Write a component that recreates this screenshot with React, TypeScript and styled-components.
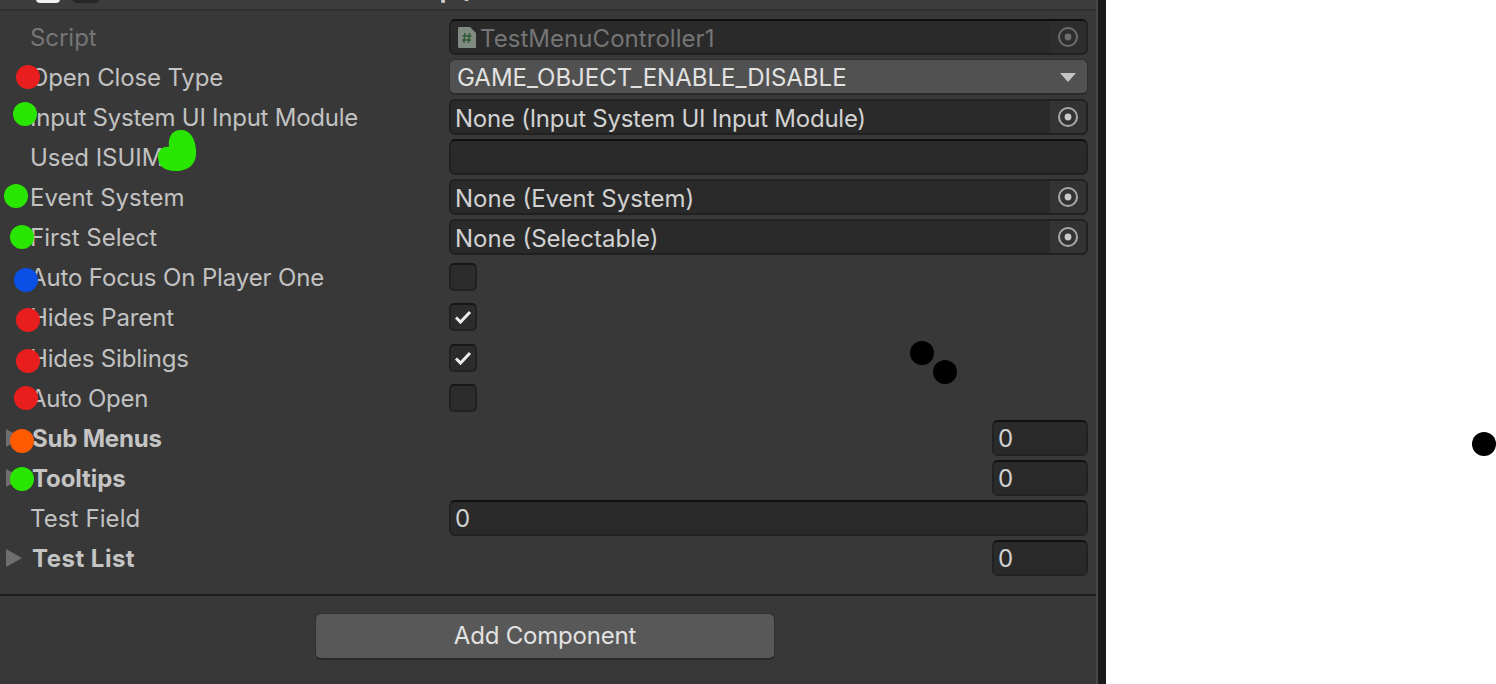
import React from "react";
import styled, { createGlobalStyle } from "styled-components";

const GlobalStyle = createGlobalStyle`
  html, body { margin: 0; padding: 0; background: #fff; }
  body { font-family: "Inter", "Liberation Sans", sans-serif; overflow: hidden; }
`;

const Page = styled.div`
  position: relative;
  display: flex;
  width: 1496px;
  height: 684px;
  overflow: hidden;
  background: #fff;
`;

const Inspector = styled.div`
  display: flex;
  flex-direction: column;
  width: 1096px;
  background: #383838;
`;

const Divider = styled.div`
  width: 8px;
  border-left: 2px solid #484848;
  background: #1a1a1a;
`;

const Header = styled.div`
  display: flex;
  align-items: flex-end;
  flex: none;
  height: 9px;
  padding-left: 36px;
  overflow: hidden;
  background: #3c3c3c;
  border-bottom: 2px solid #2f2f2f;
`;

const HeaderCheck = styled.div`
  flex: none;
  width: 24px;
  height: 24px;
  margin-bottom: 6px;
  border-radius: 4px;
  background: #f0f0f0;
`;

const HeaderIcon = styled.div`
  flex: none;
  width: 28px;
  height: 28px;
  margin: 0 0 6px 12px;
  border-radius: 5px;
  background: #262626;
`;

const HeaderTitle = styled.div`
  flex: none;
  margin: 0 0 0 34px;
  position: relative;
  top: -5px;
  font-size: 24px;
  line-height: 29px;
  font-weight: 700;
  color: #d0d0d0;
  white-space: nowrap;
`;

const Rows = styled.div`
  display: flex;
  flex-direction: column;
  flex: none;
  gap: 4.065px;
  padding: 8px 8px 0 0;
`;

const Row = styled.div`
  display: grid;
  grid-template-columns: 449px 1fr;
  align-items: center;
  height: 36px;
`;

const Label = styled.div<{ $dim?: boolean; $track?: number }>`
  padding: 2px 0 0 30px;
  font-size: 24px;
  line-height: 34px;
  letter-spacing: ${({ $track }) => $track ?? -0.05}px;
  color: ${({ $dim }) => ($dim ? "#767676" : "#c2c2c2")};
  white-space: nowrap;
`;

const FoldLabel = styled.div<{ $track?: number }>`
  display: flex;
  align-items: center;
  gap: 10px;
  padding: 2px 0 0 6px;
  font-size: 24px;
  line-height: 34px;
  font-weight: 700;
  letter-spacing: ${({ $track }) => $track ?? 0}px;
  color: #c4c4c4;
`;

const Arrow = styled.div`
  flex: none;
  width: 0;
  height: 0;
  margin-top: -2px;
  border-style: solid;
  border-width: 9px 0 9px 16px;
  border-color: transparent transparent transparent #6e6e6e;
`;

const Field = styled.div<{ $small?: boolean }>`
  display: flex;
  align-items: center;
  justify-self: ${({ $small }) => ($small ? "end" : "stretch")};
  box-sizing: border-box;
  width: ${({ $small }) => ($small ? "96px" : "auto")};
  height: 36px;
  overflow: hidden;
  border: 2px solid #212121;
  border-top-color: #0f0f0f;
  border-radius: 6px;
  background: #2a2a2a;
`;

const ObjectField = styled(Field)`
  border-color: #212121;
`;

const FieldText = styled.div<{ $dim?: boolean; $track?: number }>`
  flex: 1;
  padding: 2px 0 0 4px;
  font-size: 24px;
  line-height: 30px;
  letter-spacing: ${({ $track }) => $track ?? -0.05}px;
  color: ${({ $dim }) => ($dim ? "#757575" : "#d2d2d2")};
  white-space: nowrap;
`;

const ObjectText = styled(FieldText)`
  padding-top: 4px;
  line-height: 28px;
`;

const Picker = styled.div`
  display: flex;
  align-items: center;
  justify-content: center;
  flex: none;
  width: 36px;
  height: 100%;
  background: #333333;
`;

const ScriptPicker = styled(Picker)`
  background: #2d2d2d;
`;

const ScriptIcon = styled.svg`
  flex: none;
  margin-left: 7px;
`;

const Dropdown = styled.div`
  display: flex;
  align-items: center;
  justify-content: space-between;
  box-sizing: border-box;
  height: 36px;
  padding: 2px 11px 0 7px;
  border: 1px solid #2f2f2f;
  border-bottom: 2px solid #2a2a2a;
  border-radius: 6px;
  background: #515151;
  font-size: 24px;
  line-height: 30px;
  color: #e2e2e2;
  white-space: nowrap;
`;

const DropArrow = styled.div`
  width: 0;
  height: 0;
  border-style: solid;
  border-width: 9px 8px 0 8px;
  border-color: #c4c4c4 transparent transparent transparent;
`;

const CheckBox = styled.div`
  display: flex;
  align-items: center;
  justify-content: center;
  box-sizing: border-box;
  width: 28px;
  height: 28px;
  border: 2px solid #212121;
  border-top-color: #171717;
  border-radius: 5px;
  background: #2c2c2c;
`;

const Footer = styled.div`
  display: flex;
  justify-content: center;
  flex: 1;
  margin-top: 18px;
  padding: 17px 6px 0 0;
  border-top: 2px solid #1f1f1f;
`;

const AddButton = styled.div`
  display: flex;
  align-items: center;
  justify-content: center;
  box-sizing: border-box;
  width: 460px;
  height: 47px;
  border: 1px solid #303030;
  border-bottom: 2px solid #282828;
  border-radius: 6px;
  background: #585858;
  font-size: 24px;
  letter-spacing: -0.2px;
  color: #e2e2e2;
`;

const Blank = styled.div`
  flex: 1;
  background: #fff;
`;

const Dot = styled.div<{ $x: number; $y: number; $color: string }>`
  position: absolute;
  left: ${({ $x }) => $x - 12}px;
  top: ${({ $y }) => $y - 12}px;
  width: 24px;
  height: 24px;
  border-radius: 50%;
  background: ${({ $color }) => $color};
`;

const Blob = styled.svg`
  position: absolute;
  left: 157px;
  top: 130px;
`;

const RED = "#e81e1e";
const GREEN = "#28e600";
const BLUE = "#0a4fe6";
const ORANGE = "#ff5a00";
const BLACK = "#000";

const dots: [number, number, string][] = [
  [28, 77, RED],
  [25, 114, GREEN],
  [16, 196, GREEN],
  [22, 237, GREEN],
  [26, 280, BLUE],
  [28, 320, RED],
  [28, 361, RED],
  [26, 398, RED],
  [22, 441, ORANGE],
  [22, 479, GREEN],
  [922, 353, BLACK],
  [945, 372, BLACK],
  [1484, 444, BLACK],
];

const Target = ({ dim }: { dim?: boolean }) => (
  <svg width="22" height="22" viewBox="0 0 22 22">
    <circle cx="11" cy="11" r="9" fill="none" stroke={dim ? "#6e6e6e" : "#a8a8a8"} strokeWidth="2" />
    <circle cx="11" cy="11" r="3.4" fill={dim ? "#6e6e6e" : "#c8c8c8"} />
  </svg>
);

const Check = () => (
  <svg width="18" height="16" viewBox="0 0 18 16">
    <path d="M2 8.5 L6.5 13 L16 3" fill="none" stroke="#ececec" strokeWidth="3" />
  </svg>
);

const ObjectRow = ({ label, value, track }: { label: string; value: string; track?: number }) => (
  <Row>
    <Label $track={track}>{label}</Label>
    <ObjectField>
      <ObjectText $track={track}>{value}</ObjectText>
      <Picker><Target /></Picker>
    </ObjectField>
  </Row>
);

const ToggleRow = ({ label, on, track }: { label: string; on?: boolean; track?: number }) => (
  <Row>
    <Label $track={track}>{label}</Label>
    <CheckBox>{on && <Check />}</CheckBox>
  </Row>
);

const FoldRow = ({ label, track }: { label: string; track?: number }) => (
  <Row>
    <FoldLabel $track={track}><Arrow />{label}</FoldLabel>
    <Field $small><FieldText>0</FieldText></Field>
  </Row>
);

export default function App() {
  return (
    <Page>
      <GlobalStyle />
      <Inspector>
        <Header>
          <HeaderCheck />
          <HeaderIcon />
          <HeaderTitle>TestMenuController1 (Script)</HeaderTitle>
        </Header>
        <Rows>
          <Row>
            <Label $dim>Script</Label>
            <Field>
              <ScriptIcon width="18" height="21" viewBox="0 0 18 21">
                <path d="M1 0 H12 L18 6 V20 Q18 21 17 21 H1 Q0 21 0 20 V1 Q0 0 1 0 Z" fill="#7f8a80" />
                <path d="M7 6 L6 16 M11.5 6 L10.5 16 M4.5 9 H13.5 M4 13 H13" stroke="#2f5a35" strokeWidth="1.5" fill="none" />
              </ScriptIcon>
              <ObjectText $dim $track={0.05}>TestMenuController1</ObjectText>
              <ScriptPicker><Target dim /></ScriptPicker>
            </Field>
          </Row>
          <Row>
            <Label $track={-0.15}>Open Close Type</Label>
            <Dropdown>GAME_OBJECT_ENABLE_DISABLE<DropArrow /></Dropdown>
          </Row>
          <ObjectRow label="Input System UI Input Module" value="None (Input System UI Input Module)" track={-0.25} />
          <Row>
            <Label>Used ISUIM</Label>
            <Field />
          </Row>
          <ObjectRow label="Event System" value="None (Event System)" track={0} />
          <ObjectRow label="First Select" value="None (Selectable)" track={0} />
          <ToggleRow label="Auto Focus On Player One" track={-0.13} />
          <ToggleRow label="Hides Parent" on track={-0.1} />
          <ToggleRow label="Hides Siblings" on track={-0.15} />
          <ToggleRow label="Auto Open" track={-0.3} />
          <FoldRow label="Sub Menus" track={-0.2} />
          <FoldRow label="Tooltips" track={-0.1} />
          <Row>
            <Label $track={0.1}>Test Field</Label>
            <Field><FieldText>0</FieldText></Field>
          </Row>
          <FoldRow label="Test List" track={0.5} />
        </Rows>
        <Footer>
          <AddButton>Add Component</AddButton>
        </Footer>
      </Inspector>
      <Divider />
      <Blank />
      {dots.map(([x, y, color]) => (
        <Dot key={`${x}-${y}`} $x={x} $y={y} $color={color} />
      ))}
      <Blob width="40" height="41" viewBox="0 0 40 41">
        <path d="M1 27 C1 19 7 16 12 17 C11 8 14 0 24 0 C33 0 38 8 39 20 C40 33 33 41 18 41 C8 41 1 36 1 27 Z" fill={GREEN} />
      </Blob>
    </Page>
  );
}
